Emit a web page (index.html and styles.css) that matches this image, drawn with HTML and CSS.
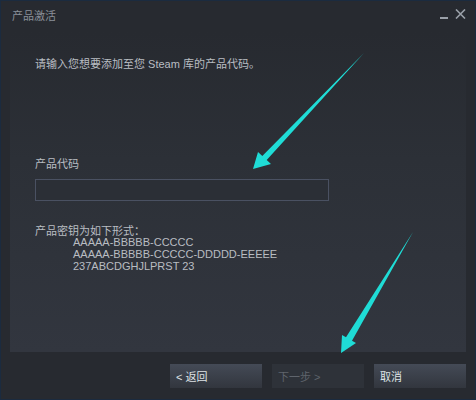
FILE: index.html
```html
<!DOCTYPE html>
<html lang="zh-CN">
<head>
    <meta charset="UTF-8">
    <title>产品激活</title>
    <link rel="stylesheet" href="styles.css">
</head>
<body>
    <div class="window">
        <div class="titlebar">
            <span class="title">产品激活</span>
            <div class="controls">
                <span class="min"></span>
                <svg class="close" width="11" height="10" viewBox="0 0 11 10">
                    <path d="M1 0.5 L10 9.5 M10 0.5 L1 9.5" stroke="#9aa0a8" stroke-width="1.6" fill="none"/>
                </svg>
            </div>
        </div>
        <div class="panel">
            <p class="intro">请输入您想要添加至您 Steam 库的产品代码。</p>
            <label class="field-label" for="code">产品代码</label>
            <input type="text" id="code" class="code-input">
            <div class="format">
                <div class="format-title">产品密钥为如下形式：</div>
                <div class="sample">AAAAA-BBBBB-CCCCC</div>
                <div class="sample">AAAAA-BBBBB-CCCCC-DDDDD-EEEEE</div>
                <div class="sample">237ABCDGHJLPRST 23</div>
            </div>
        </div>
        <div class="footer">
            <button class="btn">&lt; 返回</button>
            <button class="btn disabled">下一步 &gt;</button>
            <button class="btn">取消</button>
        </div>
    </div>

    <!-- 标注箭头 -->
    <svg class="arrows" width="476" height="400" viewBox="0 0 476 400">
        <polygon points="364,53 266.7,160.1 271,164 253,169 258,152 262.3,155.9" fill="#1fdcd6"/>
        <polygon points="413,232 352,340.8 356,343 341,353 342,335 346,337.2" fill="#1fdcd6"/>
    </svg>
</body>
</html>
```

FILE: styles.css
```css
body {
    margin: 0;
    width: 476px;
    height: 400px;
    position: relative;
    font-family: "Liberation Sans", "Noto Sans CJK SC", sans-serif;
    font-size: 11px;
    background: #272a30;
}
.window {
    box-sizing: border-box;
    width: 476px;
    height: 400px;
    border: 1px solid #1b2b3f;
    background: #272a30;
    display: flex;
    flex-direction: column;
}
.titlebar {
    height: 31px;
    display: flex;
    align-items: center;
    justify-content: space-between;
    padding: 0 9px 0 11px;
}
.title {
    color: #8a9099;
    line-height: 14px;
    margin-top: -1px;
}
.controls {
    display: flex;
    align-items: flex-end;
    gap: 7px;
    margin-top: -6px;
}
.min {
    width: 8px;
    height: 2px;
    background: #9aa0a8;
    margin-bottom: 0;
}
.close {
    display: block;
}
.panel {
    flex: 1;
    margin: 0 9px;
    padding: 25px 25px 0;
    background: linear-gradient(to bottom, #272a30 0%, #2c3037 40%, #32363f 100%);
    display: flex;
    flex-direction: column;
    align-items: flex-start;
}
.intro {
    margin: 0;
    line-height: 14px;
    color: #b9bdc2;
}
.field-label {
    margin-top: 86px;
    line-height: 14px;
    color: #b9bdc2;
}
.code-input {
    box-sizing: border-box;
    margin: 8px 0 0;
    width: 294px;
    height: 22px;
    border: 1px solid #4a5162;
    background: #2b2f36;
    padding: 0 4px;
    color: #dfe2e5;
    outline: none;
}
.format {
    margin-top: 25px;
    color: #b9bdc2;
}
.format-title {
    line-height: 10px;
}
.sample {
    padding-left: 38px;
    line-height: 12px;
}
.footer {
    height: 47px;
    display: flex;
    justify-content: flex-end;
    gap: 10px;
    padding: 12px 9px 0 0;
    box-sizing: border-box;
}
.btn {
    width: 92px;
    height: 24px;
    border: none;
    padding: 0 6px;
    text-align: left;
    font-family: inherit;
    font-size: 11px;
    color: #dfe3e6;
    background: linear-gradient(to bottom, #444a56, #32363e);
}
.btn.disabled {
    color: #5f646c;
    background: #2e3239;
}
.arrows {
    position: absolute;
    left: 0;
    top: 0;
    pointer-events: none;
}
```
